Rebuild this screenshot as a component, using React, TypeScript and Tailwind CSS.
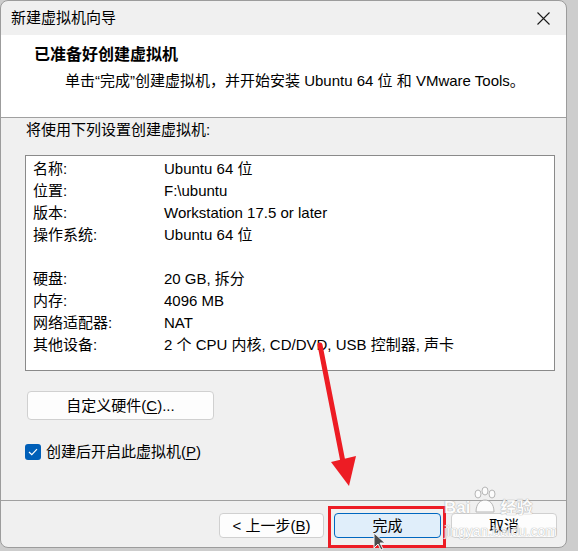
import React from "react";

const font = "font-['Liberation_Sans','Noto_Sans_CJK_SC',sans-serif]";

const rows: [string, string][] = [
  ["名称:", "Ubuntu 64 位"],
  ["位置:", "F:\\ubuntu"],
  ["版本:", "Workstation 17.5 or later"],
  ["操作系统:", "Ubuntu 64 位"],
  ["", ""],
  ["硬盘:", "20 GB, 拆分"],
  ["内存:", "4096 MB"],
  ["网络适配器:", "NAT"],
  ["其他设备:", "2 个 CPU 内核, CD/DVD, USB 控制器, 声卡"],
];

function Annotations() {
  return (
    <>
      {/* red frame around the finish button */}
      <div className="absolute left-[328px] top-[506px] h-[42px] w-[118px] border-[3px] border-[#ed1c24]" />
      {/* arrow */}
      <svg className="absolute left-0 top-0" width="578" height="551" viewBox="0 0 578 551">
        <line x1="320" y1="345" x2="343" y2="462" stroke="#ed1c24" strokeWidth="5" strokeLinecap="round" />
        <polygon points="331,462 356,456 349,486" fill="#ed1c24" />
        {/* mouse cursor */}
        <path d="M374 533 L374 548 L378 544 L381 550 L383 549 L380 543 L385 543 Z" fill="#4b4b4b" stroke="#f5f5f5" strokeWidth="1" />
      </svg>
      {/* watermark */}
      <div className="pointer-events-none absolute left-[444px] top-[486px] flex flex-col items-start opacity-80">
        <div className="flex h-[30px] items-end gap-[2px] text-[17px] font-bold leading-[17px] text-white [text-shadow:0_0_1px_#9a9a9a,0_0_1px_#9a9a9a]">
          <span>Bai</span>
          <svg width="26" height="30" viewBox="0 0 26 30">
            <g fill="#ffffff" stroke="#a8a8a8" strokeWidth="1">
              <ellipse cx="6" cy="8" rx="3" ry="4" />
              <ellipse cx="13" cy="5" rx="3" ry="4" />
              <ellipse cx="20" cy="8" rx="3" ry="4" />
              <path d="M4 26 C4 17 9 14 13 14 C17 14 22 17 22 26 Z" />
            </g>
          </svg>
          <span className="text-[16px]">经验</span>
        </div>
        <div className="mt-[8px] text-[14px] leading-[15px] text-white [text-shadow:0_0_1px_#a0a0a0,0_0_1px_#a0a0a0]">
          jingyan.baidu.com
        </div>
      </div>
    </>
  );
}

export default function App() {
  return (
    <div className={`relative h-[551px] w-[578px] overflow-hidden bg-[#cdcdcd] text-[15px] text-black ${font}`}>
      <div className="flex h-[548px] w-[567px] flex-col overflow-hidden rounded-[8px] border border-[#9c9c9c] bg-[#f0f0f0]">
        {/* title bar */}
        <div className="flex h-[34px] shrink-0 items-center justify-between pl-[10px] pr-[12px]">
          <span className="text-[15px] leading-[20px]">新建虚拟机向导</span>
          <svg width="13" height="13" viewBox="0 0 13 13" className="mr-[4px]">
            <path d="M0.5 0.5 L12.5 12.5 M12.5 0.5 L0.5 12.5" stroke="#1a1a1a" strokeWidth="1.1" />
          </svg>
        </div>

        {/* header */}
        <div className="h-[83px] shrink-0 border-b border-[#a0a0a0] bg-white pt-[10px]">
          <div className="pl-[33px] text-[16px] font-bold leading-[20px]">已准备好创建虚拟机</div>
          <div className="mt-[6px] pl-[64px] leading-[20px]">
            单击“完成”创建虚拟机，并开始安装 Ubuntu 64 位 和 VMware Tools。
          </div>
        </div>

        {/* body */}
        <div className="flex flex-1 flex-col pl-[24px] pr-[11px] pt-[3px]">
          <div className="pl-[1px] leading-[18px]">将使用下列设置创建虚拟机:</div>

          <div className="mt-[16px] h-[216px] border border-[#8a8a8a] bg-white pl-[7px] pt-[2px]">
            {rows.map(([label, value], i) => (
              <div key={i} className="flex h-[22px] items-center leading-[22px]">
                <span className="w-[131px] shrink-0">{label}</span>
                <span className="whitespace-nowrap">{value}</span>
              </div>
            ))}
          </div>

          <button className="ml-[2px] mt-[20px] flex h-[29px] w-[187px] items-center justify-center rounded-[4px] border border-[#d0d0d0] bg-[#fdfdfd] leading-[20px]">
            自定义硬件(<span className="underline underline-offset-2">C</span>)...
          </button>

          <label className="mt-[22px] flex items-center gap-[5px]">
            <span className="flex h-[16px] w-[16px] items-center justify-center rounded-[3px] bg-[#005fb8]">
              <svg width="10" height="8" viewBox="0 0 10 8">
                <path d="M1 4 L3.8 6.6 L9 1.2" fill="none" stroke="#ffffff" strokeWidth="1.2" />
              </svg>
            </span>
            <span className="leading-[20px]">
              创建后开启此虚拟机(<span className="underline underline-offset-2">P</span>)
            </span>
          </label>
        </div>

        {/* footer */}
        <div className="flex h-[47px] shrink-0 items-start justify-end gap-[10px] border-t border-[#a0a0a0] pr-[9px] pt-[12px]">
          <button className="flex h-[25px] w-[105px] items-center justify-center rounded-[4px] border border-[#d0d0d0] bg-[#fdfdfd] leading-[20px]">
            &lt; 上一步(<span className="underline underline-offset-2">B</span>)
          </button>
          <button className="flex h-[25px] w-[107px] items-center justify-center rounded-[4px] border border-[#0067c0] bg-[#e0eefa] leading-[20px]">
            完成
          </button>
          <button className="flex h-[25px] w-[106px] items-center justify-center rounded-[4px] border border-[#d0d0d0] bg-[#fdfdfd] leading-[20px]">
            取消
          </button>
        </div>
      </div>
      <Annotations />
    </div>
  );
}
